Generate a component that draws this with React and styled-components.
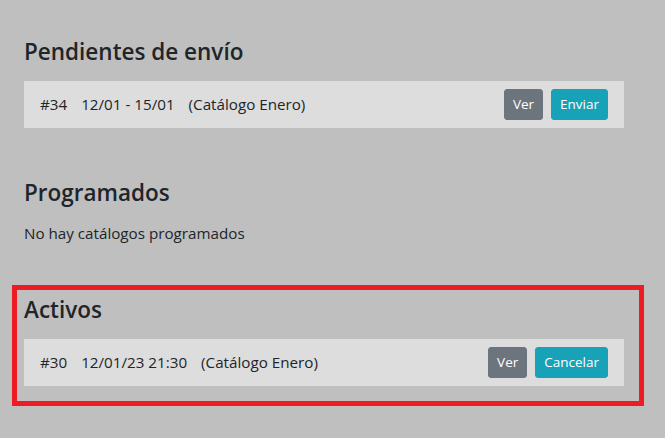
import React from "react";
import styled, { createGlobalStyle } from "styled-components";

const Global = createGlobalStyle`
  html, body {
    margin: 0;
    background: #bfbfbf;
  }
  body {
    font-family: "Segoe UI", "Open Sans", "Liberation Sans", sans-serif;
    font-size: 15.2px;
    line-height: 1.5;
    color: #212529;
  }
`;

const pending = [{ id: 34, when: "12/01 - 15/01", name: "Catálogo Enero" }];
const active = [{ id: 30, when: "12/01/23 21:30", name: "Catálogo Enero" }];

export default function App() {
  return (
    <>
      <Global />
      <Page>
        <Section>
          <Title>Pendientes de envío</Title>
          {pending.map((c) => (
            <CatalogRow key={c.id} item={c} action="Enviar" />
          ))}
        </Section>

        <Section>
          <Title>Programados</Title>
          <Empty>No hay catálogos programados</Empty>
        </Section>

        <Section $marked>
          <Title>Activos</Title>
          {active.map((c) => (
            <CatalogRow key={c.id} item={c} action="Cancelar" />
          ))}
        </Section>
      </Page>
    </>
  );
}

function CatalogRow({ item, action }) {
  return (
    <Row>
      <Info>
        <span>#{item.id}</span>
        <span>{item.when}</span>
        <span>({item.name})</span>
      </Info>
      <Actions>
        <Btn $variant="secondary">Ver</Btn>
        <Btn $variant="info">{action}</Btn>
      </Actions>
    </Row>
  );
}

const Page = styled.main`
  width: 600px;
  padding: 38px 0 60px 24px;
  display: flex;
  flex-direction: column;
  gap: 51px;
`;

const Section = styled.section`
  position: relative;

  ${(p) =>
    p.$marked &&
    `
    &::after {
      content: "";
      position: absolute;
      top: -11px;
      left: -12px;
      right: -20px;
      bottom: -20px;
      border: 5px solid #ed1c24;
      pointer-events: none;
    }
  `}
`;

const Title = styled.h4`
  margin: 0 0 16px;
  font-size: 22.5px;
  font-weight: 600;
  line-height: 1.2;
`;

const Empty = styled.p`
  margin: 0;
`;

const Row = styled.div`
  display: flex;
  align-items: center;
  justify-content: space-between;
  padding: 8px 16px;
  background: #dddddd;
`;

const Info = styled.div`
  display: flex;
  gap: 14px;
`;

const Actions = styled.div`
  display: flex;
  gap: 8px;
`;

const TONES = {
  secondary: "#6c757d",
  info: "#17a2b8",
};

const Btn = styled.button`
  font-family: inherit;
  font-size: 13.5px;
  line-height: 21px;
  padding: 4px 8px;
  border: 1px solid ${(p) => TONES[p.$variant]};
  border-radius: 3px;
  background: ${(p) => TONES[p.$variant]};
  color: #fff;
  cursor: pointer;
`;
